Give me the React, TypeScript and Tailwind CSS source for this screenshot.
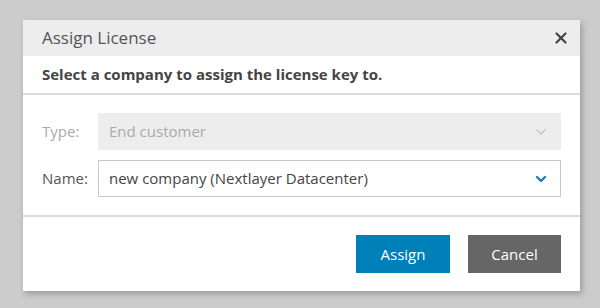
import { ChevronDown, X } from 'lucide-react';

export default function App() {
  return (
    <div className="h-[308px] w-[600px] bg-[#cccccc] pt-[20px] pl-[23px] font-['Open_Sans',sans-serif]">
      <div className="w-[557px] bg-white shadow-[2px_3px_6px_rgba(0,0,0,0.25)]">
        <div className="flex h-[36px] items-center justify-between bg-[#ededed] pl-[19px] pr-[10px]">
          <h1 className="text-[17px] text-[#555]">Assign License</h1>
          <X size={18} strokeWidth={3} className="text-[#444]" />
        </div>
        <div className="flex h-[39px] items-center border-b-2 border-[#dcdcdc] px-[19px]">
          <p className="text-[15px] font-bold text-[#444]">Select a company to assign the license key to.</p>
        </div>
        <div className="flex flex-col gap-[10px] border-b-2 border-[#dcdcdc] px-[19px] pt-[18px] pb-[18px]">
          <div className="flex items-center">
            <span className="w-[56px] text-[15px] text-[#aaa]">Type:</span>
            <div className="flex h-[37px] flex-1 items-center justify-between bg-[#ededed] pl-[11px] pr-[12px]">
              <span className="text-[15px] text-[#aaa]">End customer</span>
              <ChevronDown size={16} strokeWidth={2.5} className="text-[#c4c4c4]" />
            </div>
          </div>
          <div className="flex items-center">
            <span className="w-[56px] text-[15px] text-[#555]">Name:</span>
            <div className="flex h-[37px] flex-1 items-center justify-between border border-[#c8c8c8] pl-[10px] pr-[11px]">
              <span className="text-[15px] text-[#444]">new company (Nextlayer Datacenter)</span>
              <ChevronDown size={16} strokeWidth={3.5} className="text-[#1a7fb5]" />
            </div>
          </div>
        </div>
        <div className="flex justify-end gap-[18px] px-[19px] pt-[18px] pb-[18px]">
          <button type="button" className="h-[38px] w-[94px] bg-[#0080b8] text-[15px] text-white">Assign</button>
          <button type="button" className="h-[38px] w-[93px] bg-[#666] text-[15px] text-white">Cancel</button>
        </div>
      </div>
    </div>
  );
}
